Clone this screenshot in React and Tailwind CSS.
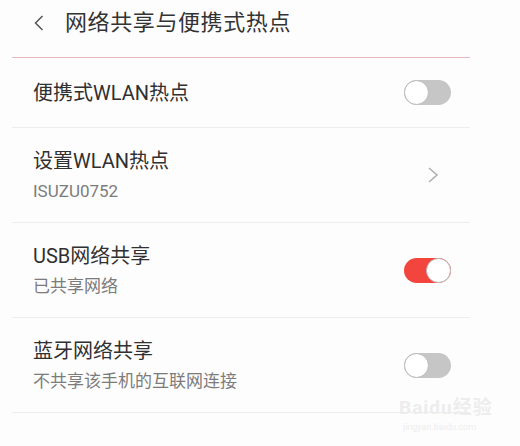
function Toggle({ on }) {
  return (
    <div
      className={`relative w-[47px] h-[25px] rounded-full flex items-center ${
        on ? "bg-[#f2453e] justify-end" : "bg-[#c6c6c6] justify-start"
      }`}
    >
      <div className="w-[25px] h-[25px] rounded-full bg-white border border-[#b9b9b9]" />
    </div>
  );
}

function Chevron() {
  return (
    <svg width="12" height="16" viewBox="0 0 12 16" className="mr-[12px]">
      <path d="M2 1 L10 8 L2 15" fill="none" stroke="#b0b0b0" strokeWidth="1.6" />
    </svg>
  );
}

function Row({ title, subtitle, right, first }) {
  return (
    <div
      className={`flex items-center justify-between pl-[21px] pr-[19px] border-b border-[#ededed] ${
        first ? "h-[70px]" : "h-[95px]"
      }`}
    >
      <div className="flex flex-col">
        <span className="text-[20px] leading-[28px] text-[#303030]">{title}</span>
        {subtitle && (
          <span className="text-[17px] leading-[24px] mt-[4px] text-[#7c7c7c]">
            {subtitle}
          </span>
        )}
      </div>
      {right}
    </div>
  );
}

export default function App() {
  const rows = [
    { title: "便携式WLAN热点", right: <Toggle on={false} />, first: true },
    { title: "设置WLAN热点", subtitle: "ISUZU0752", right: <Chevron /> },
    { title: "USB网络共享", subtitle: "已共享网络", right: <Toggle on /> },
    {
      title: "蓝牙网络共享",
      subtitle: "不共享该手机的互联网连接",
      right: <Toggle on={false} />,
    },
  ];

  return (
    <div
      className="relative w-[520px] h-[446px] bg-[#fefdfe] overflow-hidden"
      style={{ fontFamily: 'Roboto, "Noto Sans CJK SC", sans-serif' }}
    >
      <div className="h-[45px] flex items-center pl-[34px]">
        <svg width="10" height="16" viewBox="0 0 10 16">
          <path d="M8.5 1 L1.5 8 L8.5 15" fill="none" stroke="#555" strokeWidth="1.5" />
        </svg>
        <span className="ml-[21px] text-[22px] tracking-[0.6px] text-[#333]">
          网络共享与便携式热点
        </span>
      </div>
      <div className="mt-[12px] ml-[12px] w-[458px] border-t border-[#e9b9bd]" />
      <div className="ml-[12px] w-[458px]">
        {rows.map((r) => (
          <Row key={r.title} {...r} />
        ))}
      </div>

      <div className="absolute left-[399px] top-[398px] flex flex-col items-start gap-[4px] text-[#ededed] pointer-events-none">
        <span className="text-[19px] leading-[20px] font-bold tracking-[1px]">Baidu经验</span>
        <span className="text-[9px] leading-[11px] ml-[4px]">jingyan.baidu.com</span>
      </div>
    </div>
  );
}
